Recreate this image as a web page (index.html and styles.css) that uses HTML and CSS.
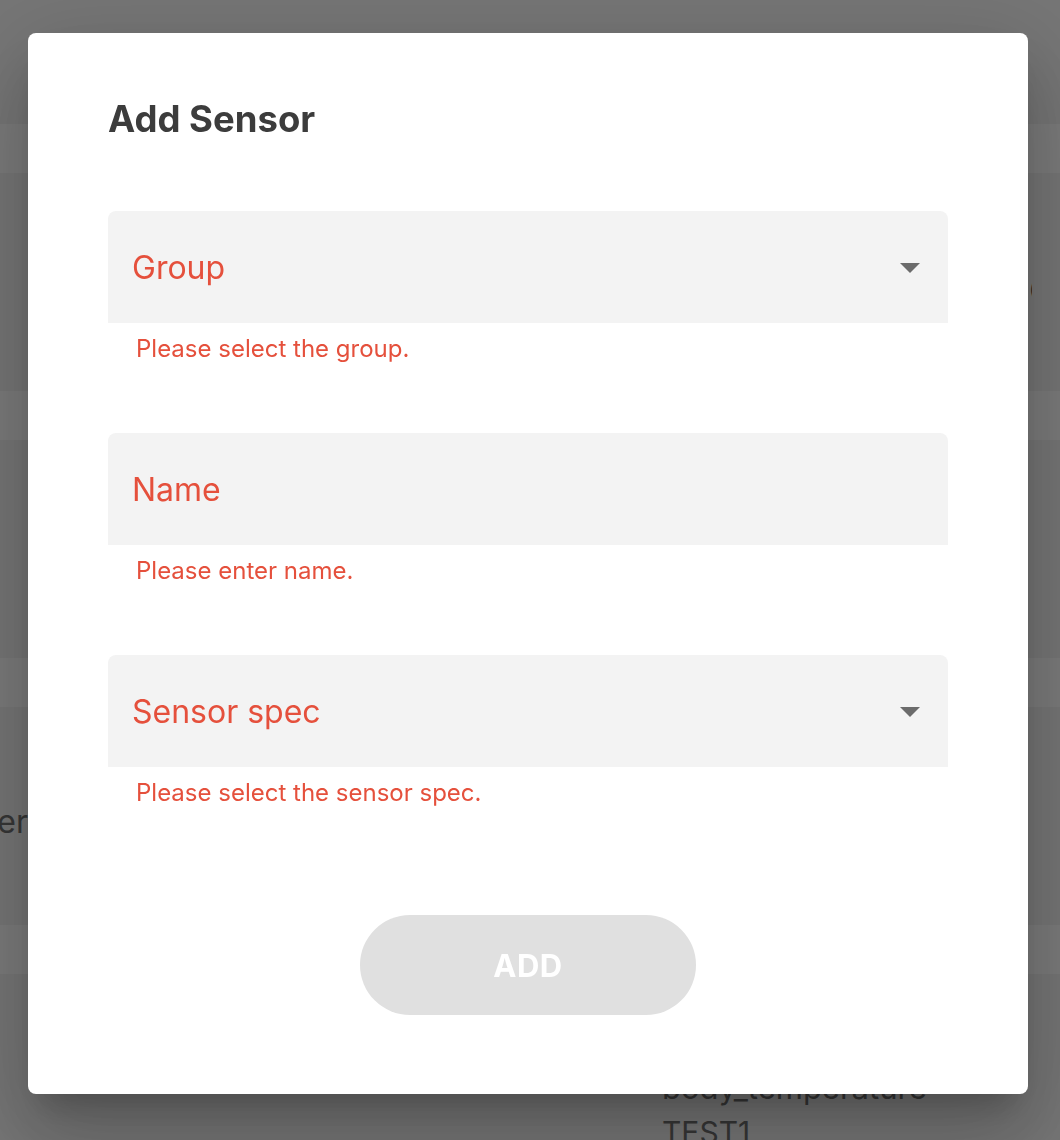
FILE: index.html
```html
<!DOCTYPE html>
<html lang="en">
<head>
<meta charset="utf-8">
<title>Add Sensor</title>
<link rel="stylesheet" href="styles.css">
</head>
<body>
<div class="page">
  <div class="row row-top"></div>
  <div class="band"></div>
  <div class="row row-a"><span class="edge-text">(</span></div>
  <div class="band"></div>
  <div class="row"></div>
  <div class="band"></div>
  <div class="row row-b"><div class="left-cell"><span>Number</span></div></div>
  <div class="band"></div>
  <div class="row row-c">
    <div class="sensor-cell">
      <div class="sensor-name">body_temperature</div>
      <div class="sensor-group">TEST1</div>
    </div>
  </div>
</div>

<div class="backdrop"></div>
<div class="modal">
  <div class="dialog">
    <h2 class="title">Add Sensor</h2>
    <div class="fields">
      <div class="field-group">
        <div class="field">
          <span class="label">Group</span>
          <svg class="arrow" viewBox="0 0 24 24" width="48" height="48"><path d="M7 10l5 5 5-5z"/></svg>
        </div>
        <p class="helper">Please select the group.</p>
      </div>
      <div class="field-group">
        <div class="field">
          <span class="label">Name</span>
        </div>
        <p class="helper">Please enter name.</p>
      </div>
      <div class="field-group">
        <div class="field">
          <span class="label">Sensor spec</span>
          <svg class="arrow" viewBox="0 0 24 24" width="48" height="48"><path d="M7 10l5 5 5-5z"/></svg>
        </div>
        <p class="helper">Please select the sensor spec.</p>
      </div>
    </div>
    <div class="actions">
      <button class="add-btn" type="button" disabled>ADD</button>
    </div>
  </div>
</div>
</body>
</html>
```

FILE: styles.css
```css
* { box-sizing: border-box; }

html, body {
  margin: 0;
  padding: 0;
  height: 100%;
  overflow: hidden;
}

body {
  font-family: Inter, "Noto Sans", "Liberation Sans", sans-serif;
  background: #ececec;
}

.page {
  display: flex;
  flex-direction: column;
  background: #ececec;
  color: #6c6c6c;
}

.row { height: 218px; }
.row-top { height: 124px; }
.band { height: 49px; background: #f7f7f7; }

.row-a {
  display: flex;
  justify-content: flex-end;
  padding-top: 106px;
}
.edge-text {
  font-size: 20px;
  line-height: 20px;
  margin-right: 28px;
  width: 3px;
  overflow: hidden;
  color: #505050;
}

.row-b {
  display: flex;
  align-items: flex-start;
  padding-top: 95px;
}
.left-cell {
  width: 28px;
  display: flex;
  justify-content: flex-end;
  white-space: nowrap;
  font-size: 32px;
  line-height: 40px;
}

.row-c {
  height: 200px;
  padding-top: 92px;
  padding-left: 662px;
}
.sensor-name, .sensor-group {
  font-size: 30px;
  line-height: 44px;
}
.sensor-name { font-size: 31px; }

.backdrop {
  position: fixed;
  inset: 0;
  background: rgba(0, 0, 0, 0.5);
}

.modal {
  position: fixed;
  inset: 0;
  display: flex;
  align-items: flex-start;
  padding: 33px 32px 0 28px;
}

.dialog {
  width: 1000px;
  background: #fff;
  border-radius: 8px;
  padding: 62px 80px 79px;
  display: flex;
  flex-direction: column;
  box-shadow: 0 22px 30px -14px rgba(0,0,0,0.2),
              0 48px 76px 6px rgba(0,0,0,0.14),
              0 18px 92px 16px rgba(0,0,0,0.12);
}

.title {
  margin: 0 0 68px;
  font-size: 36.5px;
  line-height: 48px;
  font-weight: 700;
  color: #3c3c3c;
}

.fields {
  display: flex;
  flex-direction: column;
  gap: 64px;
}

.field {
  height: 112px;
  background: #f3f3f3;
  border-radius: 8px 8px 0 0;
  display: flex;
  align-items: center;
  justify-content: space-between;
  padding: 0 14px 0 24px;
}

.label {
  font-size: 32px;
  color: #e5503c;
}

.arrow { fill: #6b6b6b; }

.helper {
  margin: 6px 28px 0;
  font-size: 24px;
  line-height: 40px;
  color: #e5503c;
}

.actions {
  display: flex;
  justify-content: center;
  margin-top: 102px;
}

.add-btn {
  width: 336px;
  height: 100px;
  border: none;
  border-radius: 50px;
  background: #e0e0e0;
  color: #fff;
  font-family: Inter, "Noto Sans", "Liberation Sans", sans-serif;
  font-size: 31px;
  font-weight: 700;
  letter-spacing: 0.5px;
}
```
